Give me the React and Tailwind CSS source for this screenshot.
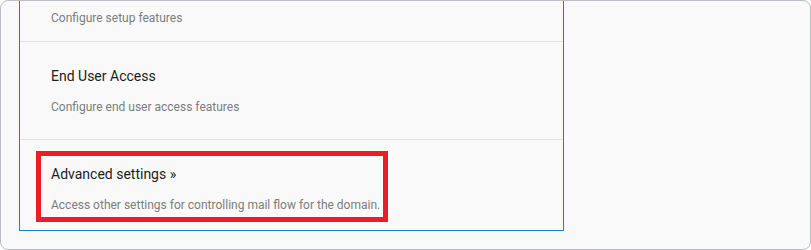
const sections = [
  { title: "End User Access", desc: "Configure end user access features" },
  { title: "Advanced settings \u00bb", desc: "Access other settings for controlling mail flow for the domain.", marked: true },
];

const App = () => {
  return (
    <div className="w-[811px] h-[250px] overflow-hidden rounded-[8px] border border-[#b9bec7] bg-[#f9f9f9] font-['Roboto','Liberation_Sans',sans-serif]">
      <div className="ml-[18px] w-[545px] border-x border-b border-[#1f7bd1] bg-[#f9f9f9]">
        <div className="pl-[31px] pt-[9px] pb-[15px] border-b border-[#e3e3e3]">
          <p className="text-[12px] leading-[16px] text-[#7d7d7d]">Configure setup features</p>
        </div>
        {sections.map((s, i) => (
          <div
            key={s.title}
            className={
              i < sections.length - 1
                ? "relative pl-[31px] pt-[24px] pb-[24px] border-b border-[#e3e3e3]"
                : "relative pl-[31px] pt-[24px] pb-[17px]"
            }
          >
            <h2 className="text-[14px] leading-[20px] text-[#1c1c1c]">{s.title}</h2>
            <p className="mt-[13px] text-[12px] leading-[16px] text-[#7d7d7d]">{s.desc}</p>
            {s.marked && (
              <div className="absolute left-[16px] top-[11px] w-[352px] h-[71px] border-[5px] border-[#ee1c25]" />
            )}
          </div>
        ))}
      </div>
    </div>
  );
};

export default App;
